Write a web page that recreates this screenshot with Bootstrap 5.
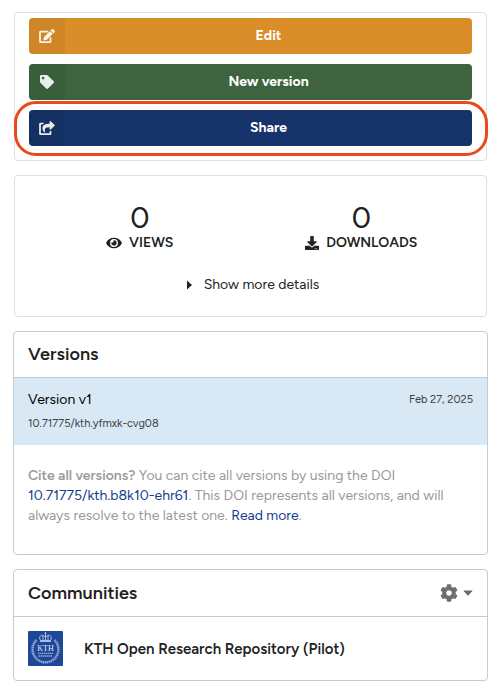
<!DOCTYPE html>
<html lang="en">
<head>
<meta charset="utf-8">
<meta name="viewport" content="width=device-width, initial-scale=1">
<title>Record sidebar</title>
<link href="https://cdn.jsdelivr.net/npm/bootstrap@5.3.0/dist/css/bootstrap.min.css" rel="stylesheet">
<style>
body { font-family: Figtree, Lato, "Liberation Sans", sans-serif; font-size: 14px; line-height: 20px; color: #212121; background: #fff; }
a { color: #143d8c; text-decoration: none; }
svg { fill: currentColor; display: block; flex: none; }
.page { padding: 12px 12px 10px 13px; display: grid; gap: 14px; }
.panel { border: 1px solid #dedfdf; border-radius: 4px; }
.inset { margin: 0 1px; }
.panel-strong { border-color: #c9cacb; }
.actions { padding: 5px 14px 14px; display: grid; gap: 10px; }
.action { height: 36px; border: 0; border-radius: 4px; color: #fff; font-weight: 700; padding: 0; display: flex; align-items: stretch; width: 100%; overflow: hidden; }
.action-icon { width: 36px; display: flex; align-items: center; justify-content: center; background: rgba(0,0,0,.05); color: rgba(255,255,255,.9); }
.action-edit { background: #da8e29; }
.action-new { background: #3d643e; }
.action-share { background: #163469; }
.action-text { flex: 1; align-self: center; }
.share-wrap { position: relative; }
.share-wrap::after { content: ""; position: absolute; inset: -9px -16px -10px -15px; border: 3px solid #e84a1f; border-radius: 22px; pointer-events: none; }
.stats { padding: 27px 14px 21px; }
.stat-number { font-size: 30px; line-height: 30px; }
.stat-name { font-weight: 600; gap: 7px; }
.stats summary { list-style: none; margin-top: 22px; }
.head { padding: 10px 14px 11px; border-bottom: 1px solid #c9cacb; }
.head h2 { font-size: 18px; line-height: 24px; font-weight: 600; }
.head-menu { padding-top: 11px; }
.version { background: #d8e8f5; padding: 12px 14px 11px; }
.version a { color: #000; }
.fine { font-size: 11px; color: #404040; }
.cite { padding: 21px 40px 28px 14px; color: #999; }
.cite strong { font-weight: 600; }
.community { padding: 14px; gap: 21px; font-size: 15px; font-weight: 600; }
.community a { color: #212121; }
.gear { border: 0; background: none; padding: 0; color: #6d6e6f; gap: 5px; }
</style>
</head>
<body>
<main class="page">
  <section class="panel inset actions">
    <button type="button" class="action action-edit"><span class="action-icon"><svg width="16" height="14" viewBox="0 0 576 512" aria-hidden="true"><path d="M402.6 83.2l90.2 90.2c3.8 3.8 3.8 10 0 13.8L274.4 405.6l-92.8 10.3c-12.4 1.4-22.9-9.1-21.5-21.5l10.3-92.8L388.8 83.2c3.8-3.8 10-3.8 13.8 0zm162-22.9l-48.8-48.8c-15.2-15.2-39.9-15.2-55.2 0l-35.4 35.4c-3.8 3.8-3.8 10 0 13.8l90.2 90.2c3.8 3.8 10 3.8 13.8 0l35.4-35.4c15.2-15.3 15.2-40 0-55.2zM384 346.2V448H64V128h229.8c3.2 0 6.2-1.3 8.5-3.5l40-40c7.6-7.6 2.2-20.5-8.5-20.5H48C21.5 64 0 85.5 0 112v352c0 26.5 21.5 48 48 48h352c26.5 0 48-21.5 48-48V306.2c0-10.7-12.9-16-20.5-8.5l-40 40c-2.2 2.3-3.5 5.3-3.5 8.5z"/></svg></span><span class="action-text">Edit</span></button>
    <button type="button" class="action action-new"><span class="action-icon"><svg width="14" height="14" viewBox="0 0 512 512" aria-hidden="true"><path d="M0 252.118V48C0 21.49 21.49 0 48 0h204.118a48 48 0 0 1 33.941 14.059l211.882 211.882c18.745 18.745 18.745 49.137 0 67.882L293.823 497.941c-18.745 18.745-49.137 18.745-67.882 0L14.059 286.059A48 48 0 0 1 0 252.118zM112 64c-26.51 0-48 21.49-48 48s21.49 48 48 48 48-21.49 48-48-21.49-48-48-48z"/></svg></span><span class="action-text">New version</span></button>
    <div class="share-wrap"><button type="button" class="action action-share"><span class="action-icon"><svg width="16" height="14" viewBox="0 0 576 512" aria-hidden="true"><path d="M568.482 177.448L424.479 313.433C409.3 327.768 384 317.14 384 295.985v-71.963c-144.575.97-205.566 35.113-164.775 171.353 4.483 14.973-12.846 26.567-25.006 17.33C155.252 383.105 120 326.488 120 269.339c0-143.937 117.599-172.5 264-173.312V24.012c0-21.174 25.317-31.768 40.479-17.448l144.003 135.988c10.02 9.463 10.028 25.425 0 34.896zM384 379.128V448H64V128h50.916a11.99 11.99 0 0 0 8.648-3.693c14.953-15.568 32.237-27.89 51.014-37.676C185.708 80.83 181.584 64 169.033 64H48C21.49 64 0 85.49 0 112v352c0 26.51 21.49 48 48 48h352c26.51 0 48-21.49 48-48v-88.806c0-8.288-8.197-14.066-16.011-11.302a71.83 71.83 0 0 1-34.189 3.377c-7.27-1.046-13.8 4.514-13.8 11.859z"/></svg></span><span class="action-text">Share</span></button></div>
  </section>

  <section class="panel inset stats">
    <div class="row g-0 text-center">
      <div class="col-6 px-2">
        <div class="stat-number">0</div>
        <div class="stat-name d-flex justify-content-center align-items-center"><svg width="16" height="14" viewBox="0 0 576 512" aria-hidden="true"><path d="M572.52 241.4C518.29 135.59 410.93 64 288 64S57.68 135.64 3.48 241.41a32.35 32.35 0 0 0 0 29.19C57.71 376.41 165.07 448 288 448s230.32-71.64 284.52-177.41a32.35 32.35 0 0 0 0-29.19zM288 400a144 144 0 1 1 144-144 143.93 143.93 0 0 1-144 144zm0-240a95.31 95.31 0 0 0-25.31 3.79 47.85 47.85 0 0 1-66.9 66.9A95.78 95.78 0 1 0 288 160z"/></svg>VIEWS</div>
      </div>
      <div class="col-6 px-2">
        <div class="stat-number">0</div>
        <div class="stat-name d-flex justify-content-center align-items-center"><svg width="14" height="14" viewBox="0 0 512 512" aria-hidden="true"><path d="M216 0h80c13.3 0 24 10.7 24 24v168h87.7c17.8 0 26.7 21.5 14.1 34.1L269.7 378.3c-7.5 7.5-19.8 7.5-27.3 0L90.1 226.1c-12.6-12.6-3.7-34.1 14.1-34.1H192V24c0-13.3 10.7-24 24-24zm296 376v112c0 13.3-10.7 24-24 24H24c-13.3 0-24-10.7-24-24V376c0-13.3 10.7-24 24-24h146.7l49 49c20.1 20.1 52.5 20.1 72.6 0l49-49H488c13.3 0 24 10.7 24 24zm-124 88c0-11-9-20-20-20s-20 9-20 20 9 20 20 20 20-9 20-20zm64 0c0-11-9-20-20-20s-20 9-20 20 9 20 20 20 20-9 20-20z"/></svg>DOWNLOADS</div>
      </div>
    </div>
    <details><summary class="d-flex justify-content-center align-items-center"><svg class="me-2" width="14" height="14" viewBox="0 0 14 14" aria-hidden="true"><path d="M5 2.500v9l5-4.500z"/></svg>Show more details</summary></details>
  </section>

  <section class="panel panel-strong">
    <div class="head d-flex align-items-center"><h2 class="m-0">Versions</h2></div>
    <div class="version">
      <div class="d-flex justify-content-between align-items-center"><a href="#">Version v1</a><span class="fine">Feb 27, 2025</span></div>
      <div class="fine mt-1">10.71775/kth.yfmxk-cvg08</div>
    </div>
    <p class="cite m-0"><strong>Cite all versions?</strong> You can cite all versions by using the DOI <a href="#">10.71775/kth.b8k10-ehr61</a>. This DOI represents all versions, and will always resolve to the latest one. <a href="#">Read more</a>.</p>
  </section>

  <section class="panel panel-strong">
    <div class="head head-menu d-flex align-items-center justify-content-between"><h2 class="m-0">Communities</h2>
      <button type="button" class="gear d-flex align-items-center" aria-label="Manage communities"><svg width="18" height="18" viewBox="0 0 512 512" aria-hidden="true"><path d="M487.4 315.7l-42.6-24.6c4.3-23.2 4.3-47 0-70.2l42.6-24.6c4.9-2.8 7.1-8.6 5.5-14-11.1-35.6-30-67.8-54.7-94.6-3.8-4.1-10-5.1-14.8-2.3L380.8 110c-17.9-15.4-38.5-27.3-60.8-35.1V25.8c0-5.6-3.9-10.5-9.4-11.7-36.7-8.2-74.3-7.8-109.2 0-5.5 1.2-9.4 6.1-9.4 11.7V75c-22.2 7.9-42.8 19.8-60.8 35.1L88.7 85.5c-4.9-2.8-11-1.9-14.8 2.3-24.7 26.7-43.6 58.9-54.7 94.6-1.7 5.4.6 11.2 5.5 14L67.3 221c-4.3 23.2-4.3 47 0 70.2l-42.6 24.6c-4.9 2.8-7.1 8.6-5.5 14 11.1 35.6 30 67.8 54.7 94.6 3.8 4.1 10 5.1 14.8 2.3l42.6-24.6c17.9 15.4 38.5 27.3 60.8 35.1v49.2c0 5.6 3.9 10.5 9.4 11.7 36.7 8.2 74.3 7.8 109.2 0 5.5-1.2 9.4-6.1 9.4-11.7v-49.2c22.2-7.9 42.8-19.8 60.8-35.1l42.6 24.6c4.9 2.8 11 1.9 14.8-2.3 24.7-26.7 43.6-58.9 54.7-94.6 1.5-5.5-.7-11.3-5.6-14.1zM256 336c-44.1 0-80-35.9-80-80s35.9-80 80-80 80 35.9 80 80-35.9 80-80 80z"/></svg><svg width="10" height="6" viewBox="0 0 10 6" aria-hidden="true"><path d="M1.200 .5h7.600q1 0 .4.8L5.600 5.300q-.6.5-1.200 0L.8 1.300Q.2.5 1.200.5z"/></svg></button>
    </div>
    <div class="community d-flex align-items-center">
      <svg width="35" height="35" viewBox="0 0 35 35" role="img" aria-label="KTH logo">
        <rect width="35" height="35" rx="1" fill="#1f4799"/>
        <g fill="none" stroke="#b9c8e6">
          <path d="M8.500 9A13 13 0 1 0 26.500 9" stroke-width="2.800" stroke-dasharray="1.300 .7" opacity=".6"/>
          <path d="M8.500 9A13 13 0 1 0 26.500 9" stroke-width=".7" opacity=".8"/>
          <path d="M12.500 9.500C10.500 6 12.500 3.500 15 4.500L17.500 6 20 4.500C22.500 3.500 24.500 6 22.500 9.500zM17.500 1.200v8M16.500 2.300h2M15 4.500v5M20 4.500v5" stroke-width=".9"/>
          <path d="M12 10.300h11" stroke-width="1.200"/>
          <path d="M10 22.300h15M10.500 25h14" stroke-width="1.300" stroke-dasharray="1.500 .5" opacity=".75"/>
        </g>
        <text x="17.500" y="19.500" text-anchor="middle" font-family="Liberation Serif, serif" font-size="8" font-weight="400" fill="#e4ebf7">KTH</text>
      </svg>
      <a href="#">KTH Open Research Repository (Pilot)</a>
    </div>
  </section>
</main>
<script src="https://cdn.jsdelivr.net/npm/bootstrap@5.3.0/dist/js/bootstrap.bundle.min.js"></script>
</body>
</html>
